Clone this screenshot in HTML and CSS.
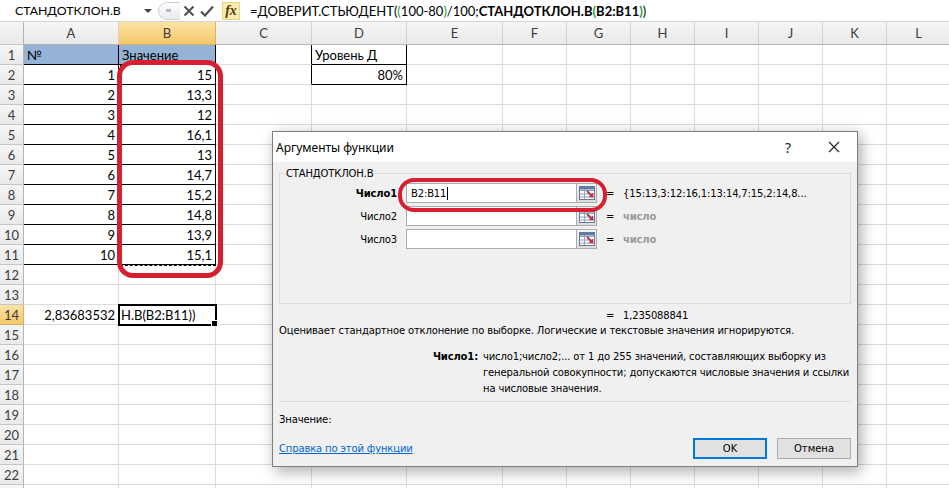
FILE: index.html
```html
<!DOCTYPE html>
<html lang="ru">
<head>
    <meta charset="UTF-8">
    <title>СТАНДОТКЛОН.В</title>
    <link rel="stylesheet" href="styles.css">
</head>
<body>
<div class="formulaBar">
    <div class="nameBox">СТАНДОТКЛОН.В</div>
    <span class="nameArrow"></span>
    <span class="grip"><i></i></span>
    <span class="fbBtn">
        <svg width="12" height="12" viewBox="0 0 12 12"><path d="M1.5 1.5 L10.5 10.5 M10.5 1.5 L1.5 10.5" stroke="#505050" stroke-width="2" fill="none"/></svg>
    </span>
    <span class="fbBtn">
        <svg width="14" height="12" viewBox="0 0 14 12"><path d="M1 6.5 L5 10.5 L13 1.5" stroke="#505050" stroke-width="2.2" fill="none"/></svg>
    </span>
    <span class="fx">fx</span>
    <div class="formula">=ДОВЕРИТ.СТЬЮДЕНТ(<span class="par">(</span>100-80<span class="par">)</span>/100;<b>СТАНДОТКЛОН.В<span class="par">(</span>B2:B11<span class="par">)</span></b>)</div>
</div>

<div class="sheet">
    <div class="row head"><div class="h"></div><div class="ch">A</div><div class="ch sel">B</div><div class="ch">C</div><div class="ch">D</div><div class="ch">E</div><div class="ch">F</div><div class="ch">G</div><div class="ch">H</div><div class="ch">I</div><div class="ch">J</div><div class="ch">K</div><div class="ch">L</div></div>
    <div class="row"><div class="h">1</div><div class="c blue bk tl">№</div><div class="c blue bk tl">Значение</div><div class="c rk"></div><div class="c bk tl">Уровень Д</div><div class="c"></div><div class="c"></div><div class="c"></div><div class="c"></div><div class="c"></div><div class="c"></div><div class="c"></div><div class="c"></div></div>
    <div class="row"><div class="h">2</div><div class="c bk">1</div><div class="c bk">15</div><div class="c rk"></div><div class="c bk">80%</div><div class="c"></div><div class="c"></div><div class="c"></div><div class="c"></div><div class="c"></div><div class="c"></div><div class="c"></div><div class="c"></div></div>
    <div class="row"><div class="h">3</div><div class="c bk">2</div><div class="c bk">13,3</div><div class="c"></div><div class="c"></div><div class="c"></div><div class="c"></div><div class="c"></div><div class="c"></div><div class="c"></div><div class="c"></div><div class="c"></div><div class="c"></div></div>
    <div class="row"><div class="h">4</div><div class="c bk">3</div><div class="c bk">12</div><div class="c"></div><div class="c"></div><div class="c"></div><div class="c"></div><div class="c"></div><div class="c"></div><div class="c"></div><div class="c"></div><div class="c"></div><div class="c"></div></div>
    <div class="row"><div class="h">5</div><div class="c bk">4</div><div class="c bk">16,1</div><div class="c"></div><div class="c"></div><div class="c"></div><div class="c"></div><div class="c"></div><div class="c"></div><div class="c"></div><div class="c"></div><div class="c"></div><div class="c"></div></div>
    <div class="row"><div class="h">6</div><div class="c bk">5</div><div class="c bk">13</div><div class="c"></div><div class="c"></div><div class="c"></div><div class="c"></div><div class="c"></div><div class="c"></div><div class="c"></div><div class="c"></div><div class="c"></div><div class="c"></div></div>
    <div class="row"><div class="h">7</div><div class="c bk">6</div><div class="c bk">14,7</div><div class="c"></div><div class="c"></div><div class="c"></div><div class="c"></div><div class="c"></div><div class="c"></div><div class="c"></div><div class="c"></div><div class="c"></div><div class="c"></div></div>
    <div class="row"><div class="h">8</div><div class="c bk">7</div><div class="c bk">15,2</div><div class="c"></div><div class="c"></div><div class="c"></div><div class="c"></div><div class="c"></div><div class="c"></div><div class="c"></div><div class="c"></div><div class="c"></div><div class="c"></div></div>
    <div class="row"><div class="h">9</div><div class="c bk">8</div><div class="c bk">14,8</div><div class="c"></div><div class="c"></div><div class="c"></div><div class="c"></div><div class="c"></div><div class="c"></div><div class="c"></div><div class="c"></div><div class="c"></div><div class="c"></div></div>
    <div class="row"><div class="h">10</div><div class="c bk">9</div><div class="c bk">13,9</div><div class="c"></div><div class="c"></div><div class="c"></div><div class="c"></div><div class="c"></div><div class="c"></div><div class="c"></div><div class="c"></div><div class="c"></div><div class="c"></div></div>
    <div class="row"><div class="h">11</div><div class="c bk">10</div><div class="c bk">15,1</div><div class="c"></div><div class="c"></div><div class="c"></div><div class="c"></div><div class="c"></div><div class="c"></div><div class="c"></div><div class="c"></div><div class="c"></div><div class="c"></div></div>
    <div class="row"><div class="h">12</div><div class="c"></div><div class="c"></div><div class="c"></div><div class="c"></div><div class="c"></div><div class="c"></div><div class="c"></div><div class="c"></div><div class="c"></div><div class="c"></div><div class="c"></div><div class="c"></div></div>
    <div class="row"><div class="h">13</div><div class="c"></div><div class="c"></div><div class="c"></div><div class="c"></div><div class="c"></div><div class="c"></div><div class="c"></div><div class="c"></div><div class="c"></div><div class="c"></div><div class="c"></div><div class="c"></div></div>
    <div class="row"><div class="h sel">14</div><div class="c">2,83683532</div><div class="c tl active">Н.В(B2:B11))<span class="fillHandle"></span></div><div class="c"></div><div class="c"></div><div class="c"></div><div class="c"></div><div class="c"></div><div class="c"></div><div class="c"></div><div class="c"></div><div class="c"></div><div class="c"></div></div>
    <div class="row"><div class="h">15</div><div class="c"></div><div class="c"></div><div class="c"></div><div class="c"></div><div class="c"></div><div class="c"></div><div class="c"></div><div class="c"></div><div class="c"></div><div class="c"></div><div class="c"></div><div class="c"></div></div>
    <div class="row"><div class="h">16</div><div class="c"></div><div class="c"></div><div class="c"></div><div class="c"></div><div class="c"></div><div class="c"></div><div class="c"></div><div class="c"></div><div class="c"></div><div class="c"></div><div class="c"></div><div class="c"></div></div>
    <div class="row"><div class="h">17</div><div class="c"></div><div class="c"></div><div class="c"></div><div class="c"></div><div class="c"></div><div class="c"></div><div class="c"></div><div class="c"></div><div class="c"></div><div class="c"></div><div class="c"></div><div class="c"></div></div>
    <div class="row"><div class="h">18</div><div class="c"></div><div class="c"></div><div class="c"></div><div class="c"></div><div class="c"></div><div class="c"></div><div class="c"></div><div class="c"></div><div class="c"></div><div class="c"></div><div class="c"></div><div class="c"></div></div>
    <div class="row"><div class="h">19</div><div class="c"></div><div class="c"></div><div class="c"></div><div class="c"></div><div class="c"></div><div class="c"></div><div class="c"></div><div class="c"></div><div class="c"></div><div class="c"></div><div class="c"></div><div class="c"></div></div>
    <div class="row"><div class="h">20</div><div class="c"></div><div class="c"></div><div class="c"></div><div class="c"></div><div class="c"></div><div class="c"></div><div class="c"></div><div class="c"></div><div class="c"></div><div class="c"></div><div class="c"></div><div class="c"></div></div>
    <div class="row"><div class="h">21</div><div class="c"></div><div class="c"></div><div class="c"></div><div class="c"></div><div class="c"></div><div class="c"></div><div class="c"></div><div class="c"></div><div class="c"></div><div class="c"></div><div class="c"></div><div class="c"></div></div>
    <div class="row"><div class="h">22</div><div class="c"></div><div class="c"></div><div class="c"></div><div class="c"></div><div class="c"></div><div class="c"></div><div class="c"></div><div class="c"></div><div class="c"></div><div class="c"></div><div class="c"></div><div class="c"></div></div>
    <div class="row"><div class="h"></div><div class="c"></div><div class="c"></div><div class="c"></div><div class="c"></div><div class="c"></div><div class="c"></div><div class="c"></div><div class="c"></div><div class="c"></div><div class="c"></div><div class="c"></div><div class="c"></div></div>
</div>

<!-- выделение диапазона и пометки -->
<div class="marquee"></div>
<div class="redMark rangeMark"></div>

<div class="dialog">
    <div class="dlgTitle">
        <span class="dlgCaption">Аргументы функции</span>
        <span class="dlgBtn">?</span>
        <span class="dlgBtn">
            <svg width="12" height="12" viewBox="0 0 12 12"><path d="M1 1 L11 11 M11 1 L1 11" stroke="#222" stroke-width="1.1" fill="none"/></svg>
        </span>
    </div>
    <div class="dlgBody">
        <fieldset class="args">
            <legend>СТАНДОТКЛОН.В</legend>
            <div class="argRow">
                <span class="argName bold">Число1</span>
                <span class="argInput">B2:B11<i class="caret"></i></span>
                <span class="refBtn">
                    <svg width="16" height="14" viewBox="0 0 16 14">
                        <rect x="0.5" y="0.5" width="15" height="13" fill="#fff" stroke="#6b7a8c"/>
                        <path d="M1 4.5 H15 M1 8 H15 M1 11 H15 M5.5 1 V13" stroke="#8fa4bd" stroke-width="1"/>
                        <rect x="0.5" y="0.5" width="15" height="3" fill="#5c7da6"/>
                        <path d="M8 5 L13 10" stroke="#c0304a" stroke-width="2"/>
                        <path d="M14.5 11.5 L9.5 11 L14 6.5 Z" fill="#c0304a"/>
                    </svg>
                </span>
                <span class="argEq">=</span>
                <span class="argVal">{15:13,3:12:16,1:13:14,7:15,2:14,8...</span>
            </div>
            <div class="argRow">
                <span class="argName">Число2</span>
                <span class="argInput"></span>
                <span class="refBtn">
                    <svg width="16" height="14" viewBox="0 0 16 14">
                        <rect x="0.5" y="0.5" width="15" height="13" fill="#fff" stroke="#6b7a8c"/>
                        <path d="M1 4.5 H15 M1 8 H15 M1 11 H15 M5.5 1 V13" stroke="#8fa4bd" stroke-width="1"/>
                        <rect x="0.5" y="0.5" width="15" height="3" fill="#5c7da6"/>
                        <path d="M8 5 L13 10" stroke="#c0304a" stroke-width="2"/>
                        <path d="M14.5 11.5 L9.5 11 L14 6.5 Z" fill="#c0304a"/>
                    </svg>
                </span>
                <span class="argEq">=</span>
                <span class="argVal hint">число</span>
            </div>
            <div class="argRow">
                <span class="argName">Число3</span>
                <span class="argInput"></span>
                <span class="refBtn">
                    <svg width="16" height="14" viewBox="0 0 16 14">
                        <rect x="0.5" y="0.5" width="15" height="13" fill="#fff" stroke="#6b7a8c"/>
                        <path d="M1 4.5 H15 M1 8 H15 M1 11 H15 M5.5 1 V13" stroke="#8fa4bd" stroke-width="1"/>
                        <rect x="0.5" y="0.5" width="15" height="3" fill="#5c7da6"/>
                        <path d="M8 5 L13 10" stroke="#c0304a" stroke-width="2"/>
                        <path d="M14.5 11.5 L9.5 11 L14 6.5 Z" fill="#c0304a"/>
                    </svg>
                </span>
                <span class="argEq">=</span>
                <span class="argVal hint">число</span>
            </div>
        </fieldset>

        <div class="result"><span class="argEq">=</span><span>1,235088841</span></div>
        <div class="descr">Оценивает стандартное отклонение по выборке. Логические и текстовые значения игнорируются.</div>
        <div class="argHelp">
            <span class="bold">Число1:</span>
            <span>число1;число2;... от 1 до 255 значений, составляющих выборку из генеральной совокупности; допускаются числовые значения и ссылки на числовые значения.</span>
        </div>
        <div class="valueLine">Значение:</div>
        <div class="dlgFooter">
            <a class="helpLink" href="#">Справка по этой функции</a>
            <button class="btn default">OK</button>
            <button class="btn">Отмена</button>
        </div>
    </div>
    <div class="redMark argMark"></div>
</div>
</body>
</html>
```

FILE: styles.css
```css
body {
    margin: 0;
    width: 949px;
    height: 488px;
    overflow: hidden;
    position: relative;
    background: #fff;
    font-family: Lato, "Liberation Sans", sans-serif;
    color: #000;
}

/* строка формул */
.formulaBar {
    display: flex;
    align-items: center;
    height: 21px;
    border-bottom: 1px solid #d4d4d4;
    font-size: 13px;
}

.nameBox {
    width: 144px;
    padding-left: 15px;
    box-sizing: border-box;
    white-space: nowrap;
    font-size: 12.3px;
}

.nameArrow {
    width: 0;
    height: 0;
    border-left: 4px solid transparent;
    border-right: 4px solid transparent;
    border-top: 4px solid #444;
}

.grip {
    display: flex;
    align-items: center;
    width: 22px;
    height: 18px;
    margin-left: 6px;
    padding-left: 7px;
    box-sizing: border-box;
    border: 1px solid #cdd1d6;
    border-right: none;
    border-radius: 9px 0 0 9px;
    background: linear-gradient(#fdfdfd, #e9ebee);
}

.grip i {
    width: 5px;
    height: 3px;
    background: #b8bcc2;
}

.fbBtn {
    display: flex;
    align-items: center;
    justify-content: center;
    width: 18px;
    height: 18px;
}

.fx {
    width: 18px;
    height: 18px;
    margin-left: 6px;
    box-sizing: border-box;
    border: 1px solid #e8d48c;
    background: #fcebad;
    font-family: "Liberation Serif", serif;
    font-style: italic;
    font-weight: bold;
    font-size: 14px;
    line-height: 16px;
    text-align: center;
    color: #4a3a10;
}

.formula {
    flex: 1;
    padding-left: 10px;
    white-space: nowrap;
}

.formula .par {
    color: #2b9a3a;
}

/* лист */
.row {
    display: grid;
    grid-template-columns: 24px 95px 97px 96px 95px 96px 64px 64px 64px 64px 64px 64px 64px;
    height: 20px;
    font-size: 13px;
}

.row.head {
    height: 23px;
}

.h, .ch {
    display: flex;
    align-items: center;
    justify-content: center;
    box-sizing: border-box;
    background: linear-gradient(#f6f6f6, #e9e9e9);
    color: #3c3c3c;
    font-size: 13px;
    border-right: 1px solid #c6c6c6;
    border-bottom: 1px solid #c6c6c6;
}

.h {
    border-right-color: #b4b4b4;
}

.ch {
    border-right-color: #d2d2d2;
    border-bottom-color: #b4b4b4;
}

.h.sel, .ch.sel {
    background: linear-gradient(#fbe3a4, #f5c76a);
    border-right-color: #d9b25f;
    border-bottom-color: #d9b25f;
}

.c {
    display: flex;
    align-items: center;
    justify-content: flex-end;
    padding: 0 3px;
    box-sizing: border-box;
    border-right: 1px solid #dadcdd;
    border-bottom: 1px solid #dadcdd;
    white-space: nowrap;
    overflow: hidden;
}

.c.tl {
    justify-content: flex-start;
}

.c.blue {
    background: #95b3d7;
}

.c.bk {
    border-right-color: #000;
    border-bottom-color: #000;
}

.c.rk {
    border-right-color: #000;
}

.c.active {
    position: relative;
    z-index: 1;
    overflow: visible;
    outline: 2px solid #000;
    outline-offset: -1px;
    padding-left: 2px;
}

.fillHandle {
    position: absolute;
    right: -3px;
    bottom: -3px;
    width: 5px;
    height: 5px;
    background: #000;
    border: 1px solid #fff;
}

.marquee {
    position: absolute;
    left: 120px;
    top: 64px;
    width: 96px;
    height: 202px;
    box-sizing: border-box;
    border: 1px dashed #000;
}

.redMark {
    position: absolute;
    box-sizing: border-box;
    border: 5px solid #d6202f;
    border-radius: 16px;
    pointer-events: none;
}

.rangeMark {
    left: 117px;
    top: 60px;
    width: 106px;
    height: 218px;
}

/* диалог */
.dialog {
    position: absolute;
    left: 272px;
    top: 131px;
    width: 586px;
    height: 336px;
    box-sizing: border-box;
    border: 1px solid #7f7f7f;
    background: #f0f0f0;
    box-shadow: 3px 4px 14px rgba(0, 0, 0, 0.35);
    font-family: "DejaVu Sans", sans-serif;
    font-size: 10px;
    letter-spacing: -0.15px;
}

.dlgTitle {
    display: flex;
    align-items: center;
    height: 30px;
    background: #fff;
    letter-spacing: 0;
}

.dlgCaption {
    flex: 1;
    padding-left: 3px;
    font-family: "Noto Sans", sans-serif;
    font-size: 12px;
}

.dlgBtn {
    display: flex;
    align-items: center;
    justify-content: center;
    width: 46px;
    height: 30px;
    font-family: "Noto Sans", sans-serif;
    font-size: 14px;
    color: #222;
}

.dlgBody {
    padding: 0 6px;
}

.args {
    height: 136px;
    margin: 6px 0 0;
    padding: 0;
    box-sizing: border-box;
    border: 1px solid #dcdcdc;
}

.args legend {
    margin-left: 4px;
    padding: 0 2px;
}

.argRow {
    display: grid;
    grid-template-columns: 126px 171px 20px 26px 1fr;
    align-items: center;
    height: 20px;
    margin-top: 3px;
}

.argRow:first-of-type {
    margin-top: 4px;
}

.argName {
    padding-right: 9px;
    text-align: right;
}

.bold {
    font-weight: bold;
}

.argInput {
    display: flex;
    align-items: center;
    height: 20px;
    padding-left: 4px;
    box-sizing: border-box;
    border: 1px solid #a9acb1;
    background: #fff;
}

.caret {
    width: 1px;
    height: 13px;
    margin-left: 1px;
    background: #000;
}

.refBtn {
    display: flex;
    align-items: center;
    justify-content: center;
    height: 20px;
    box-sizing: border-box;
    border: 1px solid #a9acb1;
    border-left: none;
    background: linear-gradient(#f4f4f4, #dcdcdc);
}

.argEq {
    text-align: center;
}

.argVal {
    white-space: nowrap;
}

.argVal.hint {
    color: #9a9a9a;
    font-weight: bold;
}

.result {
    display: grid;
    grid-template-columns: 26px auto;
    padding-left: 318px;
    margin-top: 5px;
    line-height: 14px;
}

.descr {
    margin-top: 1px;
    line-height: 14px;
}

.argHelp {
    display: grid;
    grid-template-columns: 199px 1fr;
    column-gap: 5px;
    margin-top: 11px;
    padding-bottom: 4px;
    line-height: 16px;
    border-bottom: 1px solid #dcdcdc;
}

.argHelp .bold {
    text-align: right;
}

.valueLine {
    margin-top: 11px;
    line-height: 14px;
}

.dlgFooter {
    display: flex;
    align-items: center;
    gap: 10px;
    margin-top: 11px;
}

.helpLink {
    flex: 1;
    color: #0066cc;
}

.btn {
    width: 74px;
    height: 21px;
    padding: 0;
    border: 1px solid #adadad;
    background: #e1e1e1;
    font-family: "DejaVu Sans", sans-serif;
    font-size: 10px;
    color: #000;
}

.btn.default {
    border: 2px solid #0078d7;
}

.argMark {
    left: 125px;
    top: 46px;
    width: 209px;
    height: 34px;
    border-width: 4px;
}
```
